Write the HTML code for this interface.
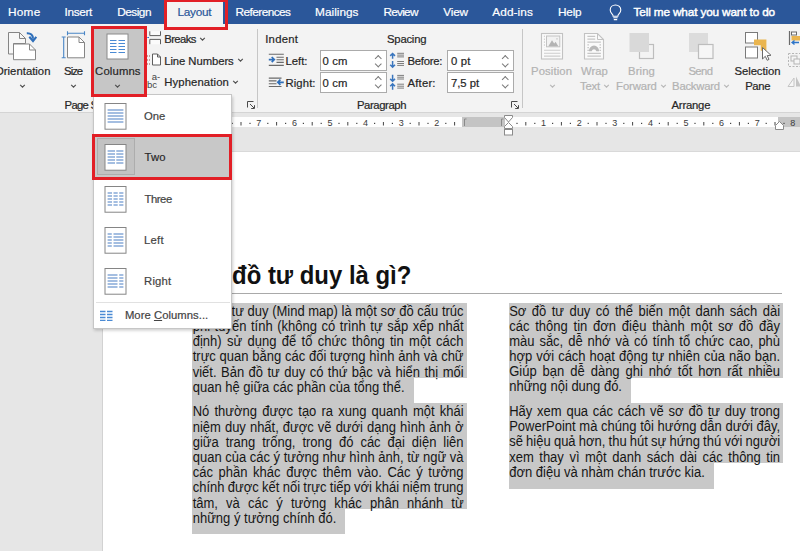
<!DOCTYPE html>
<html lang="vi">
<head>
<meta charset="utf-8">
<title>Columns - Two</title>
<style>
html,body{margin:0;padding:0;}
body{width:800px;height:551px;overflow:hidden;position:relative;background:#e6e6e6;font-family:"Liberation Sans",sans-serif;color:#262626;}
.abs{position:absolute;}
#tabbar{left:0;top:0;width:800px;height:24.300px;background:#2b579a;z-index:1;}
.lbl.tab{color:#fff;font-size:11.8px;-webkit-text-stroke:0.2px #fff;}
.lbl.dis{color:#b2b2b2;}
.lbl.dd{color:#444;}
#ribbon{left:0;top:24px;width:800px;height:88px;background:#f3f3f3;border-bottom:1px solid #d4d4d4;}
.lbl{position:absolute;z-index:2;font-size:11.3px;line-height:14px;white-space:nowrap;color:#262626;-webkit-text-stroke:0.2px currentColor;}
#page{left:102px;top:152px;width:720px;height:420px;background:#fff;border-left:1px solid #d2d2d2;}

.inp{background:#fff;border:1px solid #ababab;box-sizing:border-box;}
.inp i{position:absolute;right:5px;width:3.5px;height:3.5px;border-left:1px solid #7a7a7a;border-top:1px solid #7a7a7a;}
.inp i.up{top:4.500px;transform:rotate(45deg);}
.inp i.dn{top:10.500px;transform:rotate(225deg);}

#title{margin:0;left:192.5px;top:260.800px;transform:scaleY(1.04);transform-origin:0 23.300px;font-size:23.9px;line-height:30px;font-weight:bold;color:#111;white-space:nowrap;letter-spacing:0;}
.para{position:absolute;width:274.7px;font-size:13px;line-height:15.07px;color:#161616;--lh:15.07px;--pt:1.3px;--last:25px;}
.ln{height:calc(var(--lh) - var(--pt));background:#c8c8c8;padding:var(--pt) 3.7px 0 0.4px;text-align:left;white-space:nowrap;overflow:visible;}
.ln span{display:inline-block;position:relative;z-index:1;transform:scaleY(1.06);transform-origin:0 12.040px;}
.ln.last{display:inline-block;padding-right:9px;height:calc(var(--last) - var(--pt));vertical-align:top;}
.rb{border:3px solid #e21f26;box-sizing:border-box;z-index:6;}
</style>
</head>
<body>
<!-- document -->
<div id="page" class="abs"></div>
<div class="abs" style="left:103px;top:151px;width:697px;height:1px;background:#d9d9d9"></div>
<h1 class="abs" id="title">Sơ đồ tư duy là gì?</h1>
<div class="abs" style="left:192px;top:292.5px;width:590px;height:1px;background:#a9a9a9"></div>
<div class="para" style="left:192.3px;top:303px;--last:24.850px">
<div class="ln"><span style="word-spacing:0.018px">Sơ đồ tư duy (Mind map) là một sơ đồ cấu trúc</span></div>
<div class="ln"><span style="word-spacing:0.947px">phi tuyến tính (không có trình tự sắp xếp nhất</span></div>
<div class="ln"><span style="word-spacing:1.748px">định) sử dụng để tổ chức thông tin một cách</span></div>
<div class="ln"><span style="word-spacing:0.152px">trực quan bằng các đối tượng hình ảnh và chữ</span></div>
<div class="ln"><span style="word-spacing:0.839px">viết. Bản đồ tư duy có thứ bậc và hiển thị mối</span></div>
<div class="ln last"><span>quan hệ giữa các phần của tổng thể.</span></div>
</div>
<div class="para" style="left:192.3px;top:403.200px;--lh:15.180px;--last:25.050px">
<div class="ln"><span style="word-spacing:1.550px">Nó thường được tạo ra xung quanh một khái</span></div>
<div class="ln"><span style="word-spacing:0.430px">niệm duy nhất, được vẽ dưới dạng hình ảnh ở</span></div>
<div class="ln"><span style="word-spacing:3.323px">giữa trang trống, trong đó các đại diện liên</span></div>
<div class="ln"><span style="word-spacing:-0.012px">quan của các ý tưởng như hình ảnh, từ ngữ và</span></div>
<div class="ln"><span style="word-spacing:2.005px">các phần khác được thêm vào. Các ý tưởng</span></div>
<div class="ln"><span style="word-spacing:-0.305px">chính được kết nối trực tiếp với khái niệm trung</span></div>
<div class="ln"><span style="word-spacing:4.515px">tâm, và các ý tưởng khác phân nhánh từ</span></div>
<div class="ln last"><span>những ý tưởng chính đó.</span></div>
</div>
<div class="para" style="left:508.800px;top:302.600px;--pt:1.1px;--last:24.600px">
<div class="ln"><span style="word-spacing:1.807px">Sơ đồ tư duy có thể biến một danh sách dài</span></div>
<div class="ln"><span style="word-spacing:2.187px">các thông tin đơn điệu thành một sơ đồ đầy</span></div>
<div class="ln"><span style="word-spacing:1.302px">màu sắc, dễ nhớ và có tính tổ chức cao, phù</span></div>
<div class="ln"><span style="word-spacing:0.414px">hợp với cách hoạt động tự nhiên của não bạn.</span></div>
<div class="ln"><span style="word-spacing:2.345px">Giúp bạn dễ dàng ghi nhớ tốt hơn rất nhiều</span></div>
<div class="ln last"><span>những nội dung đó.</span></div>
</div>
<div class="para" style="left:508.800px;top:402.700px;--lh:15.200px;--last:25.800px">
<div class="ln"><span style="word-spacing:1.160px">Hãy xem qua các cách vẽ sơ đồ tư duy trong</span></div>
<div class="ln"><span style="word-spacing:0.053px">PowerPoint mà chúng tôi hướng dẫn dưới đây,</span></div>
<div class="ln"><span style="word-spacing:-0.412px">sẽ hiệu quả hơn, thu hút sự hứng thú với người</span></div>
<div class="ln"><span style="word-spacing:1.918px">xem thay vì một danh sách dài các thông tin</span></div>
<div class="ln last"><span>đơn điệu và nhàm chán trước kia.</span></div>
</div>
<svg class="abs" style="left:0;top:112px" width="800" height="40" viewBox="0 0 800 40" font-family="Liberation Sans, sans-serif" font-size="9" fill="#3a3a3a" text-anchor="middle">
<rect x="103" y="5" width="697" height="10" fill="#fefefe"/>
<rect x="103" y="5" width="89" height="10" fill="#c4c4c4"/>
<rect x="462" y="5" width="43" height="10" fill="#c4c4c4"/>
<rect x="778" y="5" width="22" height="10" fill="#c4c4c4"/>
<text x="223.2" y="13.8">8</text>
<rect x="231.6" y="10.800" width="1.2" height="1.2" fill="#444"/>
<rect x="240.5" y="10" width="1" height="3.5" fill="#444"/>
<rect x="249.4" y="10.800" width="1.2" height="1.2" fill="#444"/>
<text x="258.8" y="13.8">7</text>
<rect x="267.2" y="10.800" width="1.2" height="1.2" fill="#444"/>
<rect x="276.1" y="10" width="1" height="3.5" fill="#444"/>
<rect x="285.0" y="10.800" width="1.2" height="1.2" fill="#444"/>
<text x="294.4" y="13.8">6</text>
<rect x="302.8" y="10.800" width="1.2" height="1.2" fill="#444"/>
<rect x="311.7" y="10" width="1" height="3.5" fill="#444"/>
<rect x="320.6" y="10.800" width="1.2" height="1.2" fill="#444"/>
<text x="330.0" y="13.8">5</text>
<rect x="338.4" y="10.800" width="1.2" height="1.2" fill="#444"/>
<rect x="347.3" y="10" width="1" height="3.5" fill="#444"/>
<rect x="356.2" y="10.800" width="1.2" height="1.2" fill="#444"/>
<text x="365.6" y="13.8">4</text>
<rect x="374.0" y="10.800" width="1.2" height="1.2" fill="#444"/>
<rect x="382.9" y="10" width="1" height="3.5" fill="#444"/>
<rect x="391.8" y="10.800" width="1.2" height="1.2" fill="#444"/>
<text x="401.2" y="13.8">3</text>
<rect x="409.6" y="10.800" width="1.2" height="1.2" fill="#444"/>
<rect x="418.5" y="10" width="1" height="3.5" fill="#444"/>
<rect x="427.4" y="10.800" width="1.2" height="1.2" fill="#444"/>
<text x="436.8" y="13.8">2</text>
<rect x="445.2" y="10.800" width="1.2" height="1.2" fill="#444"/>
<rect x="454.1" y="10" width="1" height="3.5" fill="#444"/>
<rect x="516.4" y="10.800" width="1.2" height="1.2" fill="#444"/>
<rect x="525.3" y="10" width="1" height="3.5" fill="#444"/>
<rect x="534.2" y="10.800" width="1.2" height="1.2" fill="#444"/>
<text x="543.6" y="13.8">1</text>
<rect x="552.0" y="10.800" width="1.2" height="1.2" fill="#444"/>
<rect x="560.9" y="10" width="1" height="3.5" fill="#444"/>
<rect x="569.8" y="10.800" width="1.2" height="1.2" fill="#444"/>
<text x="579.2" y="13.8">2</text>
<rect x="587.6" y="10.800" width="1.2" height="1.2" fill="#444"/>
<rect x="596.5" y="10" width="1" height="3.5" fill="#444"/>
<rect x="605.4" y="10.800" width="1.2" height="1.2" fill="#444"/>
<text x="614.8" y="13.8">3</text>
<rect x="623.2" y="10.800" width="1.2" height="1.2" fill="#444"/>
<rect x="632.1" y="10" width="1" height="3.5" fill="#444"/>
<rect x="641.0" y="10.800" width="1.2" height="1.2" fill="#444"/>
<text x="650.4" y="13.8">4</text>
<rect x="658.8" y="10.800" width="1.2" height="1.2" fill="#444"/>
<rect x="667.7" y="10" width="1" height="3.5" fill="#444"/>
<rect x="676.6" y="10.800" width="1.2" height="1.2" fill="#444"/>
<text x="686.0" y="13.8">5</text>
<rect x="694.4" y="10.800" width="1.2" height="1.2" fill="#444"/>
<rect x="703.3" y="10" width="1" height="3.5" fill="#444"/>
<rect x="712.2" y="10.800" width="1.2" height="1.2" fill="#444"/>
<text x="721.6" y="13.8">6</text>
<rect x="730.0" y="10.800" width="1.2" height="1.2" fill="#444"/>
<rect x="738.9" y="10" width="1" height="3.5" fill="#444"/>
<rect x="747.8" y="10.800" width="1.2" height="1.2" fill="#444"/>
<text x="757.2" y="13.8">7</text>
<rect x="765.6" y="10.800" width="1.2" height="1.2" fill="#444"/>
<rect x="774.5" y="10" width="1" height="3.5" fill="#444"/>
<rect x="783.4" y="10.800" width="1.2" height="1.2" fill="#444"/>
<text x="792.8" y="13.8">8</text>
<path d="M464.500 14 V7 H466.500 M501.500 14 V7 H503.500" fill="none" stroke="#8a8a8a" stroke-width="1"/>
<path d="M504.500 3.5 H512.500 V5.5 L508.500 10 L504.500 5.5 Z" fill="#fff" stroke="#8a8a8a" stroke-width="1"/>
<path d="M504.500 16.500 V14.5 L508.500 10.500 L512.500 14.5 V16.500 Z" fill="#fff" stroke="#8a8a8a" stroke-width="1"/>
<rect x="504.500" y="17.500" width="8" height="5.5" fill="#fff" stroke="#8a8a8a" stroke-width="1"/>
<path d="M775.500 17.500 V13.5 L779.500 9.500 L783.500 13.5 V17.500 Z" fill="#fff" stroke="#8a8a8a" stroke-width="1"/>
</svg>

<!-- tab bar -->
<div id="tabbar" class="abs"></div>
<div class="abs" style="left:166px;top:0;width:57px;height:25px;background:#f3f3f3;z-index:1;"></div>
<div class="abs rb" style="left:164px;top:-1px;width:64px;height:31px;"></div>
<span class="lbl tab" style="left:7.9px;top:4.9px;letter-spacing:0.31px;">Home</span>
<span class="lbl tab" style="left:64.5px;top:4.9px;letter-spacing:-0.34px;">Insert</span>
<span class="lbl tab" style="left:117.3px;top:4.9px;letter-spacing:-0.51px;">Design</span>
<span class="lbl tab" style="left:177.5px;top:4.9px;letter-spacing:-0.28px;color:#2b579a;-webkit-text-stroke:0.2px #2b579a">Layout</span>
<span class="lbl tab" style="left:235.5px;top:4.9px;letter-spacing:-0.54px;">References</span>
<span class="lbl tab" style="left:315.1px;top:4.9px;letter-spacing:0.02px;">Mailings</span>
<span class="lbl tab" style="left:383.4px;top:4.9px;letter-spacing:-0.72px;">Review</span>
<span class="lbl tab" style="left:443.3px;top:4.9px;letter-spacing:-0.22px;">View</span>
<span class="lbl tab" style="left:492.3px;top:4.9px;letter-spacing:0.10px;">Add-ins</span>
<span class="lbl tab" style="left:557.9px;top:4.9px;letter-spacing:-0.16px;">Help</span>
<span class="lbl tab" style="left:633.5px;top:4.9px;letter-spacing:-0.15px;-webkit-text-stroke:0.45px #fff">Tell me what you want to do</span>
<svg class="abs" style="left:609px;top:3.500px;z-index:2" width="13" height="17" viewBox="0 0 13 17">
  <path d="M6.5 1 C3.4 1 1.2 3.2 1.2 6 C1.2 8 2.3 9 3.3 10.2 C3.9 10.9 4.1 11.4 4.1 12.2 H8.9 C8.9 11.4 9.1 10.9 9.7 10.2 C10.7 9 11.8 8 11.8 6 C11.8 3.2 9.6 1 6.5 1 Z" fill="none" stroke="#fff" stroke-width="1.1"/>
  <path d="M4.3 13.8 H8.7 M4.8 15.6 H8.2" stroke="#fff" stroke-width="1.1"/>
</svg>

<!-- ribbon -->
<div id="ribbon" class="abs"></div>
<div id="rib" class="abs" style="left:0;top:0;width:800px;height:112px;">
  <!-- Orientation -->
  <svg class="abs" style="left:6px;top:30px" width="34" height="32" viewBox="0 0 34 32">
    <path d="M2.5 2.5 H13.5 L19.5 8.500 V13.5 H7.5 V24 H2.5 Z" fill="#f7f7f7" stroke="#858585" stroke-width="1"/>
    <path d="M13.5 2.5 V8.500 H19.5" fill="none" stroke="#858585" stroke-width="1"/>
    <path d="M7.5 14 H23.500 L29.500 20 V29.700 H7.5 Z" fill="#fff" stroke="#858585" stroke-width="1"/>
    <path d="M23.500 14 V20 H29.500" fill="none" stroke="#858585" stroke-width="1"/>
    <path d="M20.800 3.200 C24.800 3 27 5.200 27 8.800" fill="none" stroke="#2f6fba" stroke-width="2.100"/>
    <path d="M23.300 6.800 L27 11 L30.300 6.800" fill="none" stroke="#2f6fba" stroke-width="2.100"/>
  </svg>
  <span class="lbl " style="left:-5.0px;top:63.9px;letter-spacing:0.02px;">Orientation</span>
  <svg class="abs chev" style="left:19px;top:84px" width="7" height="5" viewBox="0 0 7 5"><path d="M1.2 0.800 L3.5 3.100 L5.800 0.800" fill="none" stroke="#505050" stroke-width="1.2"/></svg>
  <!-- Size -->
  <svg class="abs" style="left:61px;top:30px" width="28" height="32" viewBox="0 0 28 32">
    <path d="M6.5 7 H18 L23.500 12.500 V27.800 H6.5 Z" fill="#fff" stroke="#858585" stroke-width="1"/>
    <path d="M18 7 V12.500 H23.500" fill="none" stroke="#858585" stroke-width="1"/>
    <path d="M6.5 3.200 H23.500 M6.5 1.200 V5.200 M23.500 1.200 V5.200" fill="none" stroke="#4a86c6" stroke-width="1.1"/>
    <path d="M2.700 7 V27.800 M0.700 7 H4.700 M0.700 27.800 H4.700" fill="none" stroke="#4a86c6" stroke-width="1.1"/>
  </svg>
  <span class="lbl " style="left:64.1px;top:63.9px;letter-spacing:-0.99px;">Size</span>
  <svg class="abs chev" style="left:70px;top:84px" width="7" height="5" viewBox="0 0 7 5"><path d="M1.2 0.800 L3.5 3.100 L5.800 0.800" fill="none" stroke="#505050" stroke-width="1.2"/></svg>
  <!-- Columns (highlighted) -->
  <div class="abs" style="left:93px;top:27px;width:52px;height:68px;background:#c6c6c6;"></div>
  <svg class="abs" style="left:106px;top:33px" width="23" height="27" viewBox="0 0 23 27">
    <rect x="1" y="1" width="21" height="25" fill="#fff" stroke="#8a8a8a" stroke-width="1"/>
    <g stroke="#4a8ad4" stroke-width="1.1">
      <path d="M4 7.5 H10.5 M12.5 7.5 H19"/><path d="M4 10.5 H10.5 M12.5 10.5 H19"/><path d="M4 13.5 H10.5 M12.5 13.5 H19"/><path d="M4 16.5 H10.5 M12.5 16.5 H19"/><path d="M4 19.5 H10.5 M12.5 19.5 H19"/>
    </g>
  </svg>
  <span class="lbl " style="left:95.1px;top:63.9px;letter-spacing:0.14px;">Columns</span>
  <svg class="abs chev" style="left:114px;top:84px" width="7" height="5" viewBox="0 0 7 5"><path d="M1.2 0.800 L3.5 3.100 L5.800 0.800" fill="none" stroke="#505050" stroke-width="1.2"/></svg>
  <span class="lbl " style="left:64.6px;top:97.700px;letter-spacing:-0.74px;">Page Setup</span>
  <!-- Breaks / Line numbers / Hyphenation -->
  <svg class="abs" style="left:147px;top:30px" width="16" height="16" viewBox="0 0 16 16">
    <path d="M2.800 1.300 V5.600 H13.500 V1.300 M2.800 14.200 V9.400 H13.500 V14.200" fill="#fbfbfb" stroke="#5e5e5e" stroke-width="1"/>
    <path d="M0.300 7.500 H2" stroke="#2e75c8" stroke-width="1.200"/>
  </svg>
  <span class="lbl " style="left:164.2px;top:32.3px;letter-spacing:-0.59px;">Breaks</span>
  <svg class="abs chev" style="left:199px;top:37.300px" width="7" height="5" viewBox="0 0 7 5"><path d="M1.2 0.800 L3.5 3.100 L5.800 0.800" fill="none" stroke="#505050" stroke-width="1.2"/></svg>
  <svg class="abs" style="left:146px;top:52px" width="17" height="15" viewBox="0 0 17 15">
    <path d="M6.500 2 H11.500 L14.500 5 V13 H6.500 Z" fill="#fff" stroke="#5e5e5e" stroke-width="1"/>
    <path d="M11.500 2 V5 H14.500" fill="none" stroke="#5e5e5e" stroke-width="1"/>
    <path d="M1.500 3 V5 M1.500 7 V9 M1.500 11 V13 M3.500 3 V5 M3.500 7 V9 M3.500 11 V13" stroke="#b9736f" stroke-width="1" opacity=".65"/>
  </svg>
  <span class="lbl " style="left:164.2px;top:53.7px;letter-spacing:-0.07px;">Line Numbers</span>
  <svg class="abs chev" style="left:236.5px;top:58px" width="7" height="5" viewBox="0 0 7 5"><path d="M1.2 0.800 L3.5 3.100 L5.800 0.800" fill="none" stroke="#505050" stroke-width="1.2"/></svg>
  <span class="abs" style="left:151.800px;top:72px;font-size:9.5px;line-height:10px;color:#444">a-</span>
  <span class="abs" style="left:147px;top:79.5px;font-size:9.5px;line-height:10px;color:#444">bc</span>
  <span class="lbl " style="left:164.2px;top:75.3px;letter-spacing:0.12px;">Hyphenation</span>
  <svg class="abs chev" style="left:231.5px;top:80px" width="7" height="5" viewBox="0 0 7 5"><path d="M1.2 0.800 L3.5 3.100 L5.800 0.800" fill="none" stroke="#505050" stroke-width="1.2"/></svg>
  <svg class="abs" style="left:246.500px;top:100.500px" width="9" height="9" viewBox="0 0 9 9"><path d="M0.5 6.5 V0.5 H6.500 M3 3 L7 7 M4.200 7.5 H7.5 V4.200" fill="none" stroke="#4a4a4a" stroke-width="1"/></svg>
  <div class="abs" style="left:257px;top:29px;width:1px;height:79px;background:#c6c6c6"></div>

  <!-- Paragraph group -->
  <span class="lbl " style="left:265.2px;top:32px;letter-spacing:0.27px;">Indent</span>
  <span class="lbl " style="left:387.0px;top:32px;letter-spacing:-0.22px;">Spacing</span>
  <svg class="abs" style="left:267px;top:52px" width="18" height="15" viewBox="0 0 18 15">
    <path d="M1.800 2.200 H16.800 M9.500 5.200 H16.800 M9.500 7.800 H16.800 M9.500 10.400 H16.800 M1.800 13.400 H16.800" stroke="#6a6a6a" stroke-width="1.100"/>
    <path d="M1.800 7.600 H6.800 M4.700 5 L7.300 7.600 L4.700 10.200" fill="none" stroke="#2f6fba" stroke-width="1.700"/>
  </svg>
  <span class="lbl " style="left:285.5px;top:54px;letter-spacing:0.00px;">Left:</span>
  <svg class="abs" style="left:267px;top:75.500px" width="18" height="13" viewBox="0 0 18 13">
    <path d="M1.800 2.100 H14.500 M1.800 4.900 H9.500 M1.800 7.700 H9.500 M1.800 10.500 H14.500" stroke="#6a6a6a" stroke-width="1.100"/>
    <path d="M11 6.300 H16.800 M13.400 3.700 L10.800 6.300 L13.400 8.900" fill="none" stroke="#2f6fba" stroke-width="1.700"/>
  </svg>
  <span class="lbl " style="left:285.5px;top:75.5px;letter-spacing:0.10px;">Right:</span>
  <span class="lbl " style="left:322.5px;top:54px;letter-spacing:0.17px;">0 cm</span><div class="inp abs" style="left:320.300px;top:50.300px;width:66.500px;height:21px"><i class="up"></i><i class="dn"></i></div>
  <span class="lbl " style="left:322.5px;top:75.5px;letter-spacing:0.17px;">0 cm</span><div class="inp abs" style="left:320.300px;top:71.600px;width:66.500px;height:21px"><i class="up"></i><i class="dn"></i></div>
  <svg class="abs" style="left:389px;top:52px" width="16" height="17" viewBox="0 0 16 17">
    <path d="M8.200 1.300 H15 M8.200 3.100 H15 M8.200 4.900 H15 M8.200 9.500 H15 M8.200 11.500 H15 M8.200 13.400 H15" stroke="#7d7d7d" stroke-width="1"/>
    <path d="M3.600 1.600 V6.800 M1.200 3.900 L3.600 1.500 L6 3.900 M3.600 9 V15 M1.200 12.700 L3.600 15.100 L6 12.700" fill="none" stroke="#3a76be" stroke-width="1.500"/>
  </svg>
  <span class="lbl " style="left:407.5px;top:54px;letter-spacing:-0.24px;">Before:</span>
  <svg class="abs" style="left:389px;top:73.500px" width="16" height="17" viewBox="0 0 16 17">
    <path d="M8.200 1.400 H15 M8.200 3.200 H15 M8.200 5 H15 M8.200 10.200 H15 M8.200 12.200 H15 M8.200 14.100 H15" stroke="#7d7d7d" stroke-width="1"/>
    <path d="M3.600 0.700 V7.200 M1.200 4.900 L3.600 7.300 L6 4.900 M3.600 15.700 V10 M1.200 12.300 L3.600 9.900 L6 12.300" fill="none" stroke="#3a76be" stroke-width="1.500"/>
  </svg>
  <span class="lbl " style="left:407.5px;top:75.5px;letter-spacing:0.20px;">After:</span>
  <span class="lbl " style="left:451.0px;top:54px;letter-spacing:0.22px;">0 pt</span><div class="inp abs" style="left:447.300px;top:50.300px;width:66.500px;height:21px"><i class="up"></i><i class="dn"></i></div>
  <span class="lbl " style="left:451.0px;top:75.5px;letter-spacing:-0.05px;">7,5 pt</span><div class="inp abs" style="left:447.300px;top:71.600px;width:66.500px;height:21px"><i class="up"></i><i class="dn"></i></div>
  <span class="lbl " style="left:357.0px;top:97.700px;letter-spacing:-0.41px;">Paragraph</span>
  <svg class="abs" style="left:510.500px;top:100.500px" width="9" height="9" viewBox="0 0 9 9"><path d="M0.5 6.5 V0.5 H6.500 M3 3 L7 7 M4.200 7.5 H7.5 V4.200" fill="none" stroke="#4a4a4a" stroke-width="1"/></svg>
  <div class="abs" style="left:522px;top:29px;width:1px;height:79px;background:#c6c6c6"></div>

  <!-- Arrange group -->
  <svg class="abs" style="left:540px;top:32px" width="24" height="28" viewBox="0 0 24 28">
    <rect x="1.5" y="1.5" width="21" height="25.500" fill="#fafafa" stroke="#c2c2c2" stroke-width="1.1"/>
    <rect x="6.5" y="4" width="13.300" height="10.800" fill="#f2f2f2" stroke="#c2c2c2" stroke-width="1"/>
    <path d="M8.300 14.200 L12 8.300 L14.200 11.600 L15.600 9.800 L18.300 14.200 Z" fill="#b4b4b4"/>
    <circle cx="17" cy="6.800" r="0.900" fill="#cfcfcf"/>
    <path d="M4.400 3.600 V15.400" stroke="#cdcdcd" stroke-width="1" stroke-dasharray="1.500 1.400"/>
    <path d="M4 18.200 H20.400 M4 21.300 H20.400 M4 24.100 H20.400" stroke="#cdcdcd" stroke-width="1.100"/>
  </svg>
  <span class="lbl dis" style="left:531.1px;top:63.9px;letter-spacing:0.09px;">Position</span>
  <svg class="abs" style="left:548.5px;top:84px" width="7" height="5" viewBox="0 0 7 5"><path d="M1.2 0.800 L3.5 3.100 L5.800 0.800" fill="none" stroke="#b8b8b8" stroke-width="1.2"/></svg>
  <svg class="abs" style="left:583px;top:32px" width="22" height="28" viewBox="0 0 22 28">
    <path d="M1.5 1.5 H14.500 L20.500 7.500 V27 H1.5 Z" fill="#fafafa" stroke="#c2c2c2" stroke-width="1.1"/>
    <path d="M14.500 1.500 V7.500 H20.500" fill="none" stroke="#c2c2c2" stroke-width="1"/>
    <path d="M4.400 4.300 H12.200 M4.400 7.200 H12.200 M4.400 10.100 H17.900 M4.400 21.300 H17.900 M4.400 24.100 H17.900" stroke="#c6c6c6" stroke-width="1.300"/>
    <path d="M4.400 12.800 H5.900 M16.500 12.800 H18 M4.400 15.600 H5.900 M16.500 15.600 H18 M4.400 18.400 H5.900 M16.500 18.400 H18" stroke="#c6c6c6" stroke-width="1.200"/>
    <path d="M5.900 19.300 A5 5.600 0 0 1 16.100 19.300 H13.300 A2.400 2.800 0 0 0 8.700 19.300 Z" fill="#b9b9b9"/>
  </svg>
  <span class="lbl dis" style="left:581.1px;top:63.9px;letter-spacing:0.00px;">Wrap</span>
  <span class="lbl dis" style="left:580.1px;top:79px;letter-spacing:-0.24px;">Text</span>
  <svg class="abs" style="left:602.5px;top:84px" width="7" height="5" viewBox="0 0 7 5"><path d="M1.2 0.800 L3.5 3.100 L5.800 0.800" fill="none" stroke="#b8b8b8" stroke-width="1.2"/></svg>
  <svg class="abs" style="left:628px;top:32px" width="28" height="28" viewBox="0 0 28 28">
    <rect x="11.500" y="12.5" width="14" height="14" fill="none" stroke="#bdbdbd" stroke-width="1.2"/>
    <rect x="1.5" y="1" width="19.5" height="19" fill="#d9d9d9"/>
  </svg>
  <span class="lbl dis" style="left:628.1px;top:63.9px;letter-spacing:0.11px;">Bring</span>
  <span class="lbl dis" style="left:616.1px;top:79px;letter-spacing:-0.11px;">Forward</span>
  <svg class="abs" style="left:659.5px;top:84px" width="7" height="5" viewBox="0 0 7 5"><path d="M1.2 0.800 L3.5 3.100 L5.800 0.800" fill="none" stroke="#b8b8b8" stroke-width="1.2"/></svg>
  <svg class="abs" style="left:688px;top:32px" width="28" height="28" viewBox="0 0 28 28">
    <rect x="1" y="1" width="19" height="19" fill="#dcdcdc"/>
    <rect x="10.5" y="12.5" width="14.5" height="14" fill="#f6f6f6" stroke="#bdbdbd" stroke-width="1.2"/>
  </svg>
  <span class="lbl dis" style="left:688.4px;top:63.9px;letter-spacing:-0.60px;">Send</span>
  <span class="lbl dis" style="left:672.1px;top:79px;letter-spacing:-0.24px;">Backward</span>
  <svg class="abs" style="left:723px;top:84px" width="7" height="5" viewBox="0 0 7 5"><path d="M1.2 0.800 L3.5 3.100 L5.800 0.800" fill="none" stroke="#b8b8b8" stroke-width="1.2"/></svg>
  <svg class="abs" style="left:744px;top:31px" width="30" height="30" viewBox="0 0 30 30">
    <rect x="1.5" y="1.5" width="12" height="10.5" fill="#fff" stroke="#7a7a7a" stroke-width="1"/>
    <rect x="1.5" y="16" width="12" height="11" fill="#fff" stroke="#7a7a7a" stroke-width="1"/>
    <path d="M10 8.500 H22.400 V19.800 H16.800 V14.300 H10 Z" fill="#eab54f"/>
    <path d="M18.5 16.500 V28 L21.3 25.300 L23.2 29.300 L25 28.400 L23.200 24.600 L27 24.300 Z" fill="#fff" stroke="#6a6a6a" stroke-width="1"/>
  </svg>
  <span class="lbl " style="left:734.5px;top:63.9px;letter-spacing:-0.06px;">Selection</span>
  <span class="lbl " style="left:745.2px;top:79px;letter-spacing:-0.38px;">Pane</span>
  <span class="lbl " style="left:671.5px;top:97.700px;letter-spacing:-0.20px;">Arrange</span>
  <!-- right-edge icons -->
  <svg class="abs" style="left:788px;top:30px" width="14" height="16" viewBox="0 0 14 16">
    <path d="M1.5 1 V15" stroke="#6a6a6a" stroke-width="1.2"/>
    <rect x="3.5" y="2" width="5" height="3" fill="#fff" stroke="#6a6a6a" stroke-width="1"/>
    <rect x="3.5" y="6" width="11" height="4.5" fill="#eab54f"/>
    <path d="M4 12.500 H11 M6.5 10.500 L4 12.500 L6.5 14.500" fill="none" stroke="#2e75c8" stroke-width="1.3"/>
  </svg>
  <svg class="abs" style="left:787px;top:52px" width="14" height="16" viewBox="0 0 14 16">
    <rect x="1.5" y="1.5" width="14" height="13" fill="none" stroke="#b5b5b5" stroke-width="1" stroke-dasharray="2 1.5"/>
    <rect x="4" y="4" width="6" height="5" fill="#f6f6f6" stroke="#b5b5b5" stroke-width="1"/>
    <rect x="7" y="7" width="6" height="5" fill="#f6f6f6" stroke="#b5b5b5" stroke-width="1"/>
  </svg>
  <svg class="abs" style="left:787px;top:75px" width="14" height="13" viewBox="0 0 14 13">
    <path d="M1 11.500 L7 3 V11.500 Z" fill="#f6f6f6" stroke="#c4c4c4" stroke-width="1"/>
    <path d="M9 11.500 V1.5 L14 11.500 Z" fill="#c4c4c4"/>
  </svg>
</div>

<!-- Columns dropdown -->
<div id="dd" class="abs" style="left:93px;top:93.500px;width:137px;height:233.500px;background:#fff;border:1px solid #c6c6c6;box-shadow:1px 1.5px 3px rgba(0,0,0,.2);z-index:3;"></div>
<div id="ddi" class="abs" style="left:0;top:0;z-index:4;">
<div class="abs" style="left:94px;top:135px;width:137px;height:43.500px;background:#c8c8c8;"></div>
<div class="abs" style="left:97px;top:138.400px;width:37.600px;height:36.800px;background:#c2c2c2;border:1px solid #adadad;box-sizing:border-box;"></div>
<svg class="abs" style="left:103.800px;top:102.5px" width="23" height="27" viewBox="0 0 23 27"><rect x="1" y="0.5" width="21" height="25.700" fill="#fff" stroke="#858585" stroke-width="1"/><path d="M3.6 7 H19.4 M3.6 10 H19.4 M3.6 13 H19.4 M3.6 16 H19.4 M3.6 19 H19.4" stroke="#4b7fc4" stroke-width="1.1" fill="none"/></svg>
<svg class="abs" style="left:103.800px;top:143.5px" width="23" height="27" viewBox="0 0 23 27"><rect x="1" y="0.5" width="21" height="25.700" fill="#fff" stroke="#858585" stroke-width="1"/><path d="M3.6 7 H11 M12.3 7 H19.4 M3.6 10 H11 M12.3 10 H19.4 M3.6 13 H11 M12.3 13 H19.4 M3.6 16 H11 M12.3 16 H19.4 M3.6 19 H11 M12.3 19 H19.4" stroke="#4b7fc4" stroke-width="1.1" fill="none"/></svg>
<svg class="abs" style="left:103.800px;top:185.5px" width="23" height="27" viewBox="0 0 23 27"><rect x="1" y="0.5" width="21" height="25.700" fill="#fff" stroke="#858585" stroke-width="1"/><path d="M3.6 7 H8 M9.5 7 H13.7 M15.2 7 H19.4 M3.6 10 H8 M9.5 10 H13.7 M15.2 10 H19.4 M3.6 13 H8 M9.5 13 H13.7 M15.2 13 H19.4 M3.6 16 H8 M9.5 16 H13.7 M15.2 16 H19.4 M3.6 19 H8 M9.5 19 H13.7 M15.2 19 H19.4" stroke="#4b7fc4" stroke-width="1.1" fill="none"/></svg>
<svg class="abs" style="left:103.800px;top:226.5px" width="23" height="27" viewBox="0 0 23 27"><rect x="1" y="0.5" width="21" height="25.700" fill="#fff" stroke="#858585" stroke-width="1"/><path d="M3.6 7 H7.8 M9.5 7 H19.4 M3.6 10 H7.8 M9.5 10 H19.4 M3.6 13 H7.8 M9.5 13 H19.4 M3.6 16 H7.8 M9.5 16 H19.4 M3.6 19 H7.8 M9.5 19 H19.4" stroke="#4b7fc4" stroke-width="1.1" fill="none"/></svg>
<svg class="abs" style="left:103.800px;top:267.5px" width="23" height="27" viewBox="0 0 23 27"><rect x="1" y="0.5" width="21" height="25.700" fill="#fff" stroke="#858585" stroke-width="1"/><path d="M3.6 7 H13.5 M15.2 7 H19.4 M3.6 10 H13.5 M15.2 10 H19.4 M3.6 13 H13.5 M15.2 13 H19.4 M3.6 16 H13.5 M15.2 16 H19.4 M3.6 19 H13.5 M15.2 19 H19.4" stroke="#4b7fc4" stroke-width="1.1" fill="none"/></svg>
<span class="lbl dd" style="left:144.1px;top:109.2px;letter-spacing:-0.13px;">One</span>
<span class="lbl dd" style="left:144.5px;top:149.700px;letter-spacing:0.14px;color:#2a2a2a">Two</span>
<span class="lbl dd" style="left:144.5px;top:192px;letter-spacing:-0.45px;">Three</span>
<span class="lbl dd" style="left:144.1px;top:233px;letter-spacing:0.22px;">Left</span>
<span class="lbl dd" style="left:144.1px;top:274.3px;letter-spacing:0.18px;">Right</span>
<div class="abs" style="left:95.500px;top:302px;width:134px;height:1px;background:#e1e1e1"></div>
<svg class="abs" style="left:100px;top:310px" width="13" height="11" viewBox="0 0 13 11"><path d="M0 1.5 H5.5 M7 1.5 H12.500 M0 4.500 H5.5 M7 4.500 H12.500 M0 7.500 H5.5 M7 7.500 H12.500 M0 10.3 H5.5 M7 10.3 H12.500" stroke="#4a8ad4" stroke-width="1.3"/></svg>
<span class="lbl dd" style="left:124.9px;top:308.2px;letter-spacing:0.03px;">More <u>C</u>olumns...</span>
</div>
<!-- red annotation boxes -->
<div class="abs rb" style="left:91px;top:25.500px;width:56px;height:71px;"></div>
<div class="abs rb" style="left:92px;top:133.800px;width:140.200px;height:46.100px;"></div>
</body>
</html>
